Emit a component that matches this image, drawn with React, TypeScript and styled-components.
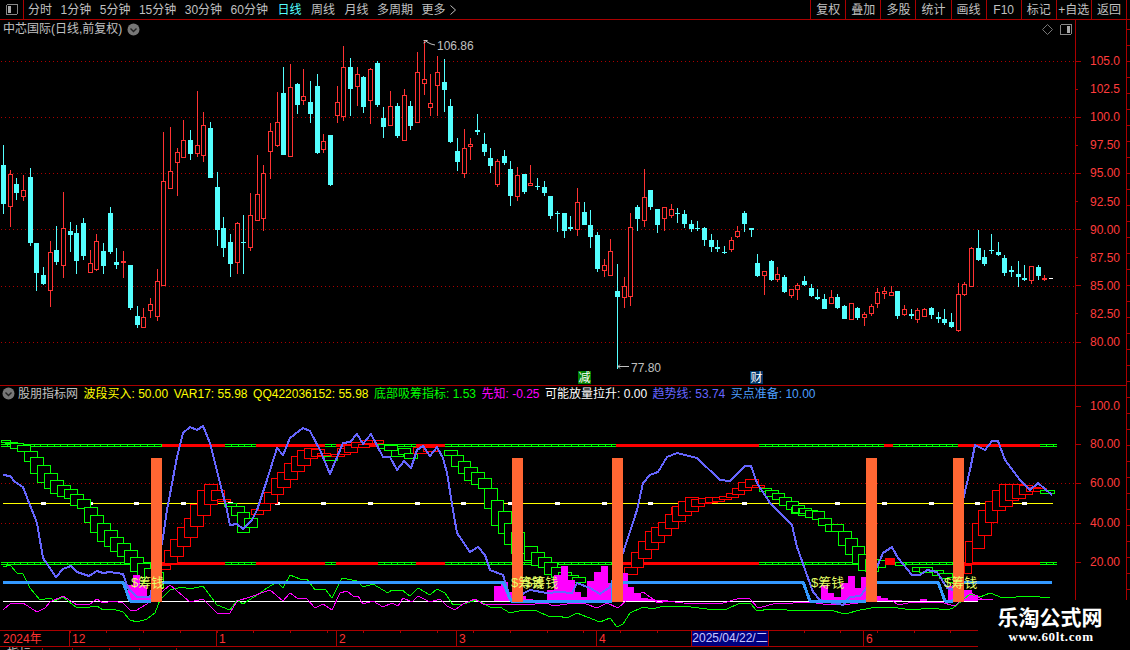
import React from "react";
import styled, { createGlobalStyle } from "styled-components";

const LINE_RED = "#aa0000";
const AXIS_RED = "#ff3c3c";
const CYAN = "#54ffff";
const UP_RED = "#ff3232";
const GREEN = "#00ff00";
const PURE_RED = "#ff0000";
const MAGENTA = "#ff00ff";
const TREND = "#6666ff";
const SKY = "#3399ff";
const ORANGE = "#ff6633";
const FONT = `"Liberation Sans", "Noto Sans CJK SC", sans-serif`;

const GlobalStyle = createGlobalStyle`
  html, body {
    margin: 0;
    padding: 0;
    background: #000;
  }
`;

const Page = styled.div`
  position: relative;
  width: 1130px;
  height: 650px;
  display: flex;
  flex-direction: column;
  overflow: hidden;
  background: #000;
  color: #c0c0c0;
  font: 12px/14px ${FONT};
`;

const Toolbar = styled.header`
  flex: 0 0 20px;
  box-sizing: border-box;
  display: flex;
  align-items: center;
  border-bottom: 1px solid ${LINE_RED};
`;

const ToggleCell = styled.div`
  width: 24px;
  height: 19px;
  box-sizing: border-box;
  display: flex;
  align-items: center;
  justify-content: center;
  border-right: 1px solid ${LINE_RED};
  margin-right: 4px;
`;

const Tabs = styled.nav`
  flex: 1;
  display: flex;
  align-items: center;
  gap: 8.5px;
`;

const Tab = styled.span<{ $active?: boolean; $wide?: boolean }>`
  color: ${(p) => (p.$active ? CYAN : "#c0c0c0")};
  margin-left: ${(p) => (p.$wide ? "1px" : "0")};
  display: flex;
  align-items: center;
  gap: 3px;
`;

const Actions = styled.div`
  display: flex;
  height: 19px;
  margin-right: 3px;
  border-right: 1px solid ${LINE_RED};
`;

const Action = styled.span`
  width: 35.1px;
  box-sizing: border-box;
  display: flex;
  align-items: center;
  justify-content: center;
  white-space: nowrap;
  border-left: 1px solid ${LINE_RED};
`;

const Workspace = styled.main`
  flex: 0 0 627px;
  display: flex;
`;

const Charts = styled.div`
  width: 1075px;
  display: flex;
  flex-direction: column;
`;

const PricePane = styled.section`
  height: 365px;
  display: flex;
  flex-direction: column;
`;

const PaneTitle = styled.div`
  height: 18px;
  display: flex;
  align-items: center;
  padding: 0 3px;
  gap: 5px;
`;

const PaneTools = styled.div`
  margin-left: auto;
  display: flex;
  align-items: center;
  gap: 7px;
`;

const IndicatorPane = styled.section`
  border-top: 1px solid ${LINE_RED};
  display: flex;
  flex-direction: column;
`;

const Legend = styled.div`
  height: 15px;
  display: flex;
  align-items: center;
  padding-left: 2px;
  gap: 5.5px;
  white-space: nowrap;
`;

const LegendItem = styled.span<{ $color: string }>`
  color: ${(p) => p.$color};
`;

const LegendName = styled.span`
  margin-left: -2.5px;
`;

const ChartSvg = styled.svg`
  display: block;
  font-family: ${FONT};
  font-size: 12px;
`;

const Scale = styled.aside`
  width: 52px;
  box-sizing: border-box;
  display: flex;
  flex-direction: column;
  border-left: 1px solid ${LINE_RED};
  border-right: 1px solid ${LINE_RED};
`;

const ScaleSection = styled.div<{ $height: number; $divided?: boolean }>`
  position: relative;
  height: ${(p) => p.$height}px;
  border-top: ${(p) => (p.$divided ? `1px solid ${LINE_RED}` : "none")};
`;

const ScaleRow = styled.div`
  position: absolute;
  left: 0;
  height: 14px;
  display: flex;
  align-items: center;
  color: ${AXIS_RED};
`;

const ScaleTick = styled.i<{ $major?: boolean }>`
  width: ${(p) => (p.$major ? 5 : 2)}px;
  margin-right: ${(p) => (p.$major ? 9 : 12)}px;
  height: 1px;
  background: ${LINE_RED};
`;

const Rail = styled.div`
  width: 3px;
  background-image: repeating-linear-gradient(
    to bottom,
    ${LINE_RED} 0 1px,
    transparent 1px 16px
  );
  background-size: 3px 100%;
  margin-top: 9px;
`;

const DateAxis = styled.div`
  position: relative;
  height: 17px;
  box-sizing: border-box;
  border-top: 1px solid ${LINE_RED};
  border-bottom: 1px solid ${LINE_RED};
  color: ${UP_RED};
  background-image: repeating-linear-gradient(
    to right,
    ${LINE_RED} 0 1px,
    transparent 1px 36.7px
  );
  background-size: 100% 2px;
  background-repeat: no-repeat;
  background-position: 33px 0;
`;

const DateStart = styled.span`
  position: absolute;
  left: 3px;
  top: 1px;
`;

const MonthMark = styled.span`
  position: absolute;
  top: 0;
  bottom: 0;
  border-left: 1px solid ${LINE_RED};
  padding-left: 2px;
  line-height: 16px;
`;

const CursorDate = styled.span`
  position: absolute;
  left: 691px;
  top: 0;
  width: 78px;
  height: 15px;
  box-sizing: border-box;
  background: #000080;
  border-left: 1px solid ${LINE_RED};
  border-right: 1px solid ${LINE_RED};
  color: #c8c8ff;
  line-height: 15px;
  text-align: center;
  white-space: nowrap;
`;

const Footer = styled.footer`
  flex: 1;
  display: flex;
  overflow: hidden;
`;

const FooterTab = styled.span<{ $width: number }>`
  width: ${(p) => p.$width}px;
  box-sizing: border-box;
  padding-left: 7px;
  line-height: 12px;
  margin-top: 1px;
  border-right: 1px solid ${LINE_RED};
  white-space: nowrap;
`;

const Watermark = styled.div`
  position: absolute;
  right: 0;
  bottom: 0;
  width: 152px;
  height: 50px;
  background: #000;
  color: #fff;
  display: flex;
  flex-direction: column;
  align-items: center;
`;

const WatermarkTitle = styled.div`
  margin: 4px 0 0 -8px;
  font: 700 21px/24px "Noto Sans CJK SC", sans-serif;
`;

const WatermarkUrl = styled.div`
  margin: 2px 0 0 -6px;
  font: 700 13px/14px "Liberation Serif", serif;
  letter-spacing: 0.6px;
`;

// candles read off the chart: kind, high, body top, body bottom, low (3x pixels from y0)
type Row = [string, number, number, number, number];
type Candle = { kind: string; hi: number; top: number; bot: number; lo: number };

const seg = (y0: number, rows: Row[]): Candle[] =>
  rows.map(([kind, hi, top, bot, lo]) => ({
    kind,
    hi: Math.round(y0 + hi / 3),
    top: Math.round(y0 + top / 3),
    bot: Math.round(y0 + bot / 3),
    lo: Math.round(y0 + lo / 3),
  }));

const candles: Candle[] = [
  ...seg(130, [
    ["c", 45, 105, 222, 252], ["r", 120, 133, 230, 291], ["c", 144, 162, 189, 210], ["r", 136, 181, 200, 213],
    ["c", 114, 141, 339, 348], ["c", 339, 339, 429, 483], ["c", 411, 435, 462, 465], ["r", 334, 367, 483, 531],
    ["c", 288, 360, 396, 405], ["r", 186, 295, 407, 444], ["c", 276, 303, 315, 366], ["c", 285, 309, 393, 432],
    ["c", 264, 279, 378, 390], ["r", 360, 400, 428, 428], ["r", 312, 334, 419, 423], ["c", 339, 363, 408, 432],
    ["c", 231, 249, 366, 372], ["c", 354, 396, 405, 417], ["r", 363, 393, 396, 444], ["c", 405, 405, 534, 540],
    ["c", 528, 558, 585, 594], ["r", 534, 562, 593, 593], ["r", 504, 523, 542, 564], ["r", 417, 454, 560, 573],
    ["r", 6, 154, 468, 468], ["r", -9, 124, 176, 176], ["r", 54, 67, 98, 198], ["r", -30, 31, 83, 83],
    ["c", 0, 30, 72, 90], ["r", -117, 46, 71, 81], ["r", -54, -14, 77, 96], ["c", -24, -6, 144, 144],
    ["c", 126, 171, 300, 348], ["c", 261, 294, 354, 381], ["c", 312, 336, 402, 441], ["r", 276, 280, 399, 432],
    ["c", 255, 336, 339, 432], ["r", 189, 256, 353, 363], ["r", 75, 193, 272, 272], ["r", 105, 130, 266, 303],
    ["r", -22, 3, 65, 147], ["r", -114, -23, 47, 50], ["c", -189, -111, 75, 75], ["r", -198, -129, 80, 80],
  ]),
  ...seg(40, [
    ["c", 128, 132, 195, 222], ["r", 87, 169, 182, 195], ["c", 123, 186, 222, 249], ["c", 102, 138, 340, 342],
    ["r", 282, 304, 330, 339], ["c", 285, 285, 435, 438], ["r", 138, 187, 227, 249], ["r", 18, 82, 231, 243],
    ["c", 54, 81, 147, 228], ["r", 81, 103, 140, 198], ["c", 108, 111, 201, 219], ["r", 84, 88, 182, 252],
    ["c", 63, 69, 195, 201], ["c", 201, 234, 261, 294], ["r", 153, 199, 257, 257], ["c", 189, 198, 288, 294],
    ["r", 147, 166, 302, 302], ["c", 183, 198, 258, 270], ["r", 36, 97, 248, 248], ["r", 3, 118, 131, 165],
    ["r", 102, 190, 203, 228], ["r", 48, 97, 137, 228], ["c", 57, 126, 150, 216], ["c", 177, 198, 306, 309],
    ["c", 294, 333, 366, 393], ["r", 267, 325, 402, 414], ["r", 294, 313, 322, 360], ["c", 222, 270, 276, 285],
    ["c", 279, 312, 336, 348], ["c", 324, 354, 378, 399], ["r", 357, 364, 435, 441], ["c", 330, 348, 369, 375],
    ["c", 363, 387, 468, 498], ["r", 381, 406, 471, 483], ["c", 402, 402, 456, 462], ["r", 375, 430, 437, 437],
    ["c", 414, 438, 441, 450], ["c", 423, 441, 459, 468], ["c", 468, 468, 528, 537], ["c", 513, 519, 522, 576],
    ["c", 519, 519, 573, 594], ["c", 528, 561, 567, 573], ["r", 444, 487, 570, 588],
  ]),
  ...seg(160, [
    ["c", 126, 156, 195, 195], ["c", 150, 195, 231, 264], ["c", 216, 225, 327, 336], ["r", 297, 316, 332, 351],
    ["r", 237, 274, 347, 347], ["c", 312, 393, 411, 627], ["r", 351, 379, 413, 444], ["r", 159, 202, 410, 438],
    ["c", 135, 141, 177, 213], ["r", 27, 112, 182, 201], ["c", 90, 90, 141, 150], ["c", 147, 147, 195, 219],
    ["r", 141, 142, 176, 213], ["r", 132, 148, 167, 174], ["c", 144, 159, 161, 189], ["c", 150, 162, 192, 204],
    ["c", 180, 192, 207, 216], ["c", 183, 205, 208, 213], ["c", 201, 204, 240, 258], ["c", 222, 240, 261, 276],
    ["c", 240, 261, 267, 276], ["c", 258, 276, 279, 282], ["r", 231, 241, 270, 276], ["r", 198, 214, 232, 234],
    ["c", 153, 159, 192, 216], ["c", 204, 204, 210, 231], ["c", 282, 309, 348, 351], ["r", 334, 334, 347, 405],
    ["c", 300, 303, 360, 363], ["r", 321, 343, 359, 366], ["c", 345, 351, 396, 399], ["r", 388, 388, 407, 414],
    ["r", 369, 376, 389, 420], ["c", 348, 363, 375, 378],
  ]),
  ...seg(210, [
    ["c", 222, 234, 258, 261], ["c", 237, 261, 267, 270], ["c", 252, 267, 297, 297], ["r", 240, 262, 281, 281],
    ["c", 252, 261, 294, 297], ["c", 285, 288, 327, 327], ["r", 280, 280, 329, 329], ["c", 291, 294, 324, 330],
    ["r", 306, 313, 323, 348], ["r", 283, 289, 311, 318], ["r", 234, 247, 281, 294], ["r", 231, 244, 251, 267],
    ["r", 228, 247, 257, 257], ["c", 243, 243, 318, 327], ["r", 285, 298, 315, 318], ["c", 297, 312, 318, 327],
    ["r", 294, 301, 329, 339], ["r", 294, 298, 320, 320], ["c", 291, 294, 315, 327], ["c", 306, 321, 327, 339],
    ["c", 297, 327, 339, 345], ["c", 309, 336, 351, 354], ["r", 219, 252, 362, 366], ["r", 216, 223, 255, 258],
    ["r", 111, 115, 231, 231], ["c", 60, 114, 150, 153], ["c", 120, 141, 162, 168], ["c", 72, 120, 123, 132],
    ["c", 96, 126, 135, 138], ["c", 135, 144, 189, 198], ["c", 168, 180, 186, 201], ["c", 153, 192, 201, 231],
    ["c", 165, 204, 210, 213], ["r", 168, 168, 212, 222], ["c", 165, 171, 198, 210],
  ]),
];

const barX = (i: number) => Math.floor(3.5 + 6.675 * i);

function CandleMark({ candle, index }: { candle: Candle; index: number }) {
  const x = barX(index);
  const { kind, hi, top, bot, lo } = candle;
  if (kind === "c") {
    return (
      <g fill={CYAN}>
        <rect x={x} y={hi} width={1} height={Math.max(lo - hi, 1)} />
        <rect x={x - 2} y={top} width={5} height={Math.max(bot - top, 1)} />
      </g>
    );
  }
  return (
    <g>
      <rect x={x} y={hi} width={1} height={Math.max(lo - hi, 1)} fill={UP_RED} />
      <rect x={x - 1.5} y={top + 0.5} width={4} height={Math.max(bot - top - 1, 1)} fill="#000" stroke={UP_RED} />
    </g>
  );
}

function DottedLine({ y }: { y: number }) {
  const dots: number[] = [];
  for (let x = 1; x < 1075; x += 4) dots.push(x);
  return (
    <g fill={LINE_RED}>
      {dots.map((x) => (
        <rect key={x} x={x} y={y} width={1} height={1} />
      ))}
    </g>
  );
}

function PriceChart() {
  const grid = [61, 117, 173, 229, 286, 342];
  return (
    <ChartSvg width={1075} height={347} viewBox="0 38 1075 347" shapeRendering="crispEdges">
      {grid.map((y) => (
        <DottedLine key={y} y={y} />
      ))}
      {candles.map((c, i) => (
        <CandleMark key={i} candle={c} index={i} />
      ))}
      <rect x={1044} y={275} width={1} height={6} fill={UP_RED} />
      <rect x={1042} y={278} width={5} height={2} fill={UP_RED} />
      <rect x={1049} y={278} width={4} height={1} fill="#fff" />
      <g stroke="#c0c0c0" fill="none" shapeRendering="auto">
        <path d="M423.5 40.5h4M423.5 43l4-2M427 42l4 2 4 1" />
        <path d="M618 366.5h11M618 366.5l2-2M618 366.5l2 2" />
      </g>
      <text x={437} y={50} fill="#c0c0c0">106.86</text>
      <text x={631} y={372} fill="#c0c0c0">77.80</text>
      <rect x={578} y={371} width={13} height={13} fill="#008000" />
      <text x={578.5} y={382} fill="#fff">减</text>
      <rect x={750} y={371} width={13} height={13} fill="#003366" />
      <text x={750.5} y={382} fill="#fff">财</text>
    </ChartSvg>
  );
}

type Box = [number, number, number, number];
type Seg = [string, number, number];

const boxes = (x0: number, y0: number, rows: Box[]): Box[] =>
  rows.map(([a, b, c, d]) => [
    Math.round(x0 + a / 3),
    Math.round(y0 + b / 3),
    Math.round(x0 + c / 3),
    Math.round(y0 + d / 3),
  ]);

const greenBoxes: Box[] = [
  ...boxes(0, 425, [
    [3, 45, 30, 50], [14, 50, 50, 55], [30, 55, 68, 68], [52, 60, 90, 77], [72, 77, 110, 107], [91, 97, 128, 143],
    [112, 121, 149, 170], [133, 145, 170, 190], [151, 166, 188, 205], [172, 181, 209, 212], [193, 193, 230, 220],
    [211, 208, 248, 239], [232, 223, 269, 250], [253, 247, 290, 292], [271, 271, 308, 320], [292, 295, 329, 347],
    [313, 316, 350, 363], [331, 337, 368, 378], [352, 355, 389, 393], [373, 376, 410, 415], [391, 397, 428, 439],
    [412, 415, 449, 457], [433, 430, 470, 475], [452, 442, 489, 487],
  ]),
  ...boxes(0, 370, [
    [673, 400, 708, 408], [694, 409, 731, 435], [712, 425, 748, 486], [733, 444, 770, 471],
    [973, 258, 1010, 270], [1133, 223, 1170, 235], [1152, 225, 1190, 240], [1173, 240, 1210, 257],
    [1194, 235, 1230, 252], [1212, 250, 1250, 265],
  ]),
  ...boxes(420, 370, [
    [72, 241, 110, 255], [93, 256, 130, 288], [114, 273, 151, 308], [133, 291, 170, 330], [154, 306, 191, 343],
    [175, 325, 212, 355], [193, 355, 230, 415], [214, 390, 250, 465], [235, 423, 272, 488], [253, 458, 290, 522],
    [1016, 353, 1052, 363], [1036, 360, 1073, 378], [1055, 370, 1092, 388], [1076, 382, 1113, 405],
    [1097, 394, 1134, 418], [1115, 405, 1152, 425], [1136, 415, 1173, 430],
  ]),
  ...boxes(420, 510, [
    [274, 65, 311, 128], [313, 109, 350, 150], [334, 127, 371, 165], [355, 142, 392, 170], [373, 157, 410, 192],
    [394, 172, 431, 200], [415, 185, 452, 205], [436, 196, 473, 212], [457, 202, 494, 217],
  ]),
  ...boxes(780, 510, [
    [34, -10, 70, 10], [55, -5, 90, 14], [76, 0, 112, 20], [97, 3, 132, 27], [115, 25, 152, 45], [134, 43, 172, 62],
    [154, 43, 190, 64], [173, 64, 212, 105], [196, 85, 232, 132], [215, 109, 252, 160], [235, 133, 272, 180],
    [256, 148, 293, 182], [295, 150, 315, 170], [345, 155, 375, 165], [397, 172, 433, 182], [418, 172, 455, 185],
    [455, 180, 490, 195], [478, 190, 515, 205], [500, 200, 535, 215],
  ]),
  [1040, 490, 1054, 493],
];

const redBoxes: Box[] = [
  ...boxes(0, 510, [
    [470, 165, 509, 178], [493, 120, 530, 160], [511, 87, 548, 137], [532, 52, 569, 109], [553, 24, 590, 81],
  ]),
  ...boxes(0, 370, [
    [571, 402, 608, 469], [592, 361, 629, 435], [613, 343, 650, 402], [634, 361, 671, 390], [652, 388, 689, 392],
    [752, 418, 790, 432], [773, 400, 810, 420], [793, 365, 831, 400], [814, 323, 850, 373], [832, 307, 869, 352],
    [853, 280, 890, 328], [874, 258, 912, 304], [892, 240, 930, 284], [913, 235, 950, 265], [934, 238, 971, 258],
    [952, 250, 989, 256], [994, 252, 1031, 258], [1012, 235, 1050, 252], [1033, 226, 1070, 245],
    [1054, 215, 1090, 232], [1075, 222, 1106, 230], [1087, 210, 1130, 218], [1115, 210, 1150, 218],
    [1240, 230, 1285, 248], [1270, 232, 1310, 242],
  ]),
  ...boxes(420, 370, [
    [754, 412, 792, 430], [775, 398, 812, 420], [796, 390, 833, 410], [814, 386, 851, 407], [835, 384, 872, 400],
    [856, 382, 892, 395], [875, 380, 912, 393], [897, 378, 934, 387], [918, 370, 955, 380], [935, 353, 972, 373],
    [955, 337, 992, 361], [976, 328, 1013, 350], [997, 345, 1033, 350],
  ]),
  ...boxes(420, 510, [
    [613, 172, 650, 192], [634, 127, 670, 172], [655, 94, 692, 145], [676, 64, 713, 118], [694, 52, 731, 97],
    [715, 37, 752, 76], [736, 12, 773, 55], [757, -12, 794, 34], [775, -28, 812, 15], [796, -40, 833, 2],
  ]),
  ...boxes(780, 510, [
    [552, 165, 572, 190], [555, 92, 575, 160], [575, 40, 612, 115], [594, 0, 632, 75], [615, -26, 652, 35],
  ]),
  [992, 490, 1005, 510], [999, 484, 1012, 506], [1005, 484, 1018, 500], [1012, 484, 1025, 498],
  [1019, 485, 1032, 494], [1026, 487, 1040, 491], [1033, 488, 1046, 491],
];

// later boxes cover earlier ones, so everything is painted left to right with a black fill
const stepBoxes = [
  ...greenBoxes.map((b) => ({ b, color: GREEN })),
  ...redBoxes.map((b) => ({ b, color: PURE_RED })),
].sort((p, q) => p.b[0] - q.b[0]);

const bandSegments: Seg[] = [
  ["g", 1, 162], ["r", 162, 225], ["g", 225, 256], ["r", 256, 325], ["g", 325, 336], ["r", 336, 378],
  ["g", 378, 416], ["r", 416, 445], ["g", 445, 616], ["r", 616, 759], ["g", 759, 884], ["r", 884, 893],
  ["g", 893, 958], ["r", 958, 1040], ["g", 1040, 1057],
];

function Band({ y }: { y: number }) {
  return (
    <g>
      {bandSegments.map(([kind, a, b]) => {
        if (kind === "r") {
          return <rect key={a} x={a} y={y} width={b - a} height={3} fill={PURE_RED} />;
        }
        const ticks: number[] = [];
        for (let t = a + 6; t < b; t += 6.675) ticks.push(Math.round(t));
        return (
          <g key={a} fill={GREEN}>
            <rect x={a} y={y} width={b - a} height={1} />
            <rect x={a} y={y + 2} width={b - a} height={1} />
            {ticks.map((t) => (
              <rect key={t} x={t} y={y + 1} width={1} height={1} />
            ))}
          </g>
        );
      })}
    </g>
  );
}

const histogram: Box[] = [
  [128, 585, 133, 601], [133, 575, 140, 601], [140, 585, 147, 601], [147, 596, 151, 601],
  [494, 586, 501, 601], [501, 582, 508, 601], [508, 592, 512, 601], [523, 596, 526, 601], [526, 599, 533, 601],
  [547, 590, 554, 601], [554, 575, 561, 601], [561, 566, 568, 601], [568, 580, 575, 601], [575, 592, 581, 601],
  [581, 597, 587, 601], [587, 581, 594, 601], [594, 572, 601, 601], [601, 566, 608, 601], [608, 583, 612, 601],
  [623, 573, 628, 601], [628, 587, 634, 601], [634, 593, 641, 601], [641, 598, 648, 601], [648, 599, 655, 601],
  [655, 600, 668, 601],
  [821, 585, 828, 601], [828, 593, 834, 601], [834, 597, 841, 601], [841, 583, 848, 601], [848, 576, 855, 601],
  [855, 588, 861, 601], [861, 577, 866, 601], [877, 596, 881, 601], [881, 598, 888, 601], [888, 600, 902, 601],
  [920, 599, 927, 601], [948, 586, 953, 601], [964, 590, 972, 601], [972, 595, 978, 601], [978, 599, 985, 601],
];

const pts = (flat: number[]) => {
  const out: string[] = [];
  for (let i = 0; i < flat.length; i += 2) out.push(`${flat[i]},${flat[i + 1]}`);
  return out.join(" ");
};

const trendLine = pts([
  3, 475, 10, 476, 15, 482, 23, 487, 28, 500, 37, 523, 43, 558, 56, 577, 63, 569, 71, 566, 77, 572, 89, 576, 97, 571,
  103, 573, 110, 572, 123, 574, 128, 588, 137, 597, 150, 597, 163, 538, 167, 510, 177, 457, 183, 433, 190, 427, 197, 430,
  203, 426, 210, 443, 220, 483, 227, 510, 230, 525, 237, 524, 243, 529, 252, 520, 257, 510, 267, 480, 277, 448, 283, 455,
  290, 438, 303, 428, 310, 431, 320, 450, 330, 474, 343, 443, 350, 442, 357, 434, 363, 444, 371, 434, 383, 457, 390, 457,
  397, 470, 404, 461, 411, 468, 417, 450, 423, 446, 430, 456, 437, 447, 443, 458, 447, 473, 453, 510, 457, 533, 470, 552,
  478, 547, 485, 555, 490, 570, 503, 575, 511, 600, 530, 590, 547, 593, 560, 592, 572, 593, 577, 583, 590, 588, 600, 594,
  610, 587, 623, 553, 637, 510, 643, 483, 650, 475, 658, 472, 667, 457, 677, 453, 697, 458, 720, 480, 730, 481, 745, 466,
  751, 466, 757, 483, 770, 503, 780, 513, 792, 525, 797, 547, 813, 592, 820, 600, 843, 605, 850, 597, 860, 596, 865, 590,
  877, 567, 883, 553, 892, 547, 898, 558, 912, 575, 920, 575, 927, 570, 937, 572, 947, 588, 953, 590, 963, 500, 970, 470,
  975, 445, 985, 450, 992, 441, 998, 441, 1005, 460, 1020, 480, 1030, 490, 1038, 483, 1052, 495,
]);

const skyLine = pts([
  3, 582, 123, 582, 130, 601, 151, 601, 162, 582, 503, 582, 511, 601, 575, 601, 612, 601, 612, 582, 803, 582, 810, 601,
  866, 601, 877, 582, 938, 582, 945, 601, 953, 601, 964, 582, 1052, 582,
]);

const greenLine = pts([
  3, 567, 10, 565, 17, 573, 23, 574, 30, 588, 40, 600, 50, 598, 55, 601, 63, 597, 77, 608, 90, 607, 97, 606, 103, 610,
  113, 609, 123, 612, 130, 620, 137, 622, 147, 619, 155, 613, 160, 600, 170, 590, 182, 587, 190, 589, 203, 586, 217, 605,
  230, 610, 237, 600, 243, 604, 257, 595, 267, 588, 277, 582, 283, 588, 290, 575, 300, 579, 307, 579, 315, 590, 325, 589,
  332, 598, 342, 578, 347, 579, 357, 581, 363, 587, 373, 584, 388, 593, 392, 590, 402, 590, 410, 596, 418, 588, 430, 595,
  437, 589, 445, 593, 453, 605, 463, 604, 477, 600, 490, 607, 500, 607, 510, 613, 523, 610, 537, 611, 550, 617, 558, 616,
  567, 618, 577, 613, 587, 617, 600, 622, 610, 618, 617, 627, 623, 624, 630, 613, 643, 607, 653, 609, 663, 606, 683, 606,
  707, 609, 727, 609, 740, 603, 750, 603, 757, 611, 770, 609, 787, 610, 800, 611, 830, 610, 845, 614, 860, 610, 877, 607,
  890, 607, 913, 610, 930, 608, 947, 610, 953, 608, 963, 600, 970, 594, 980, 597, 990, 593, 1003, 598, 1030, 596, 1050, 598,
]);

const magentaLine = pts([
  3, 610, 10, 604, 23, 603, 37, 612, 45, 608, 50, 602, 63, 596, 77, 605, 90, 604, 97, 599, 103, 603, 113, 601, 123, 603,
  130, 610, 137, 610, 150, 602, 170, 585, 190, 602, 203, 599, 217, 613, 230, 613, 237, 601, 250, 597, 270, 590, 283, 601,
  290, 593, 297, 598, 307, 599, 315, 608, 323, 604, 332, 610, 340, 593, 347, 591, 353, 596, 358, 596, 363, 604, 373, 601,
  383, 607, 392, 603, 398, 606, 403, 598, 412, 602, 418, 596, 430, 602, 440, 599, 447, 606, 455, 610, 463, 604, 475, 599,
  483, 604, 500, 604, 523, 605, 547, 603, 553, 606, 567, 604, 583, 603, 597, 608, 607, 603, 618, 608, 627, 600, 643, 592,
  650, 597, 658, 603, 667, 601, 683, 603, 720, 604, 740, 598, 750, 599, 758, 608, 777, 603, 793, 603, 808, 602, 823, 604,
  843, 605, 880, 600, 893, 601, 898, 605, 913, 602, 940, 602, 955, 606, 970, 592, 983, 600, 993, 599,
]);

function IndicatorChart() {
  const squares: number[] = [];
  for (let x = 43; x < 1030; x += 46.72) squares.push(Math.round(x));
  const bars = [151, 512, 612, 866, 953];
  const tags = [131, 511, 525, 811, 944];
  return (
    <ChartSvg width={1075} height={229} viewBox="0 401 1075 229" shapeRendering="crispEdges">
      {[483, 523].map((y) => (
        <DottedLine key={y} y={y} />
      ))}
      <rect x={3} y={503} width={1050} height={1} fill="#ffff00" />
      {squares.map((x) => (
        <rect key={x} x={x - 2} y={502} width={5} height={3} fill="#fff" />
      ))}
      <Band y={444} />
      <Band y={562} />
      {stepBoxes.map(({ b: [a, t, c, d], color }, i) => (
        <rect key={i} x={a + 0.5} y={t + 0.5} width={c - a} height={Math.max(d - t, 1)} fill="#000" stroke={color} />
      ))}
      <rect x={885} y={558} width={10} height={7} fill={PURE_RED} />
      {histogram.map(([a, b, c, d], i) => (
        <rect key={i} x={a} y={b} width={c - a} height={d - b} fill={MAGENTA} />
      ))}
      <rect x={3} y={601} width={975} height={1} fill="#fff" />
      <g fill="none" strokeLinejoin="round">
        <polyline points={greenLine} stroke={GREEN} strokeWidth={1} />
        <polyline points={magentaLine} stroke={MAGENTA} strokeWidth={1} />
        <polyline points={trendLine} stroke={TREND} strokeWidth={2} />
        <polyline points={skyLine} stroke={SKY} strokeWidth={3} />
      </g>
      {bars.map((x) => (
        <rect key={x} x={x} y={458} width={11} height={144} fill={ORANGE} />
      ))}
      {tags.map((x) => (
        <text key={x} x={x} y={587} fill="#e6ff66" fontSize={13}>$筹钱</text>
      ))}
    </ChartSvg>
  );
}

function RoundChevron() {
  return (
    <svg width="13" height="13" viewBox="0 0 13 13">
      <circle cx="6.5" cy="6.5" r="6" fill="#777" />
      <path d="M3.5 5.5l3 3 3-3" fill="none" stroke="#222" strokeWidth="1.4" />
    </svg>
  );
}

function SplitToggle({ side }: { side: "left" | "right" }) {
  return (
    <svg width="12" height="11" viewBox="0 0 12 11" shapeRendering="crispEdges">
      <rect x="0.5" y="0.5" width="11" height="10" rx="1.5" fill="none" stroke="#888" />
      <rect x={side === "left" ? 2 : 7} y="2" width="3" height="7" fill="#aaa" />
    </svg>
  );
}

function Diamond() {
  return (
    <svg width="11" height="11" viewBox="0 0 11 11">
      <path d="M5.5 .5l5 5-5 5-5-5z" fill="none" stroke="#777" />
    </svg>
  );
}

const periodTabs = ["分时", "1分钟", "5分钟", "15分钟", "30分钟", "60分钟"];
const actions = ["复权", "叠加", "多股", "统计", "画线", "F10", "标记", "+自选", "返回"];
const legend = [
  { color: "#ffff00", text: "波段买入: 50.00" },
  { color: "#ffff00", text: "VAR17: 55.98" },
  { color: "#ffff00", text: "QQ422036152: 55.98" },
  { color: "#00ff00", text: "底部吸筹指标: 1.53" },
  { color: "#ff00ff", text: "先知: -0.25" },
  { color: "#ffffff", text: "可能放量拉升: 0.00" },
  { color: "#6666ff", text: "趋势线: 53.74" },
  { color: "#4d9fff", text: "买点准备: 10.00" },
];
const priceScale = ["105.0", "102.5", "100.0", "97.50", "95.00", "92.50", "90.00", "87.50", "85.00", "82.50", "80.00"];
const indicatorScale = [
  { label: "100.0", y: 406 },
  { label: "80.00", y: 444 },
  { label: "60.00", y: 483 },
  { label: "40.00", y: 523 },
  { label: "20.00", y: 562 },
];
const months = [
  { label: "12", x: 69 },
  { label: "1", x: 216 },
  { label: "2", x: 336 },
  { label: "3", x: 456 },
  { label: "4", x: 596 },
  { label: "6", x: 863 },
];
const footerTabs = [
  { text: "指标", width: 43 },
  { text: "", width: 30 },
  { text: "", width: 37 },
  { text: "", width: 30 },
  { text: "", width: 37 },
];

export default function App() {
  return (
    <Page>
      <GlobalStyle />
      <Toolbar>
        <ToggleCell>
          <SplitToggle side="left" />
        </ToggleCell>
        <Tabs>
          {periodTabs.map((t) => (
            <Tab key={t}>{t}</Tab>
          ))}
          <Tab $active $wide>日线</Tab>
          <Tab $wide>周线</Tab>
          <Tab $wide>月线</Tab>
          <Tab>多周期</Tab>
          <Tab>
            更多
            <svg width="8" height="10" viewBox="0 0 8 10">
              <path d="M1.5 .5l5 4.5-5 4.5" fill="none" stroke="#c0c0c0" />
            </svg>
          </Tab>
        </Tabs>
        <Actions>
          {actions.map((a) => (
            <Action key={a}>{a}</Action>
          ))}
        </Actions>
      </Toolbar>
      <Workspace>
        <Charts>
          <PricePane>
            <PaneTitle>
              中芯国际(日线,前复权)
              <RoundChevron />
              <PaneTools>
                <Diamond />
                <SplitToggle side="right" />
              </PaneTools>
            </PaneTitle>
            <PriceChart />
          </PricePane>
          <IndicatorPane>
            <Legend>
              <RoundChevron />
              <LegendName>股朋指标网</LegendName>
              {legend.map((l) => (
                <LegendItem key={l.text} $color={l.color}>{l.text}</LegendItem>
              ))}
            </Legend>
            <IndicatorChart />
          </IndicatorPane>
          <DateAxis>
            <DateStart>2024年</DateStart>
            {months.map((m) => (
              <MonthMark key={m.label} style={{ left: m.x }}>{m.label}</MonthMark>
            ))}
            <CursorDate>2025/04/22/二</CursorDate>
          </DateAxis>
        </Charts>
        <Scale>
          <ScaleSection $height={365}>
            {priceScale.map((label, i) => (
              <ScaleRow key={label} style={{ top: 34 + i * 28.1 }}>
                <ScaleTick $major={i % 2 === 0} />
                {label}
              </ScaleRow>
            ))}
          </ScaleSection>
          <ScaleSection $height={261} $divided>
            {indicatorScale.map((s) => (
              <ScaleRow key={s.label} style={{ top: s.y - 386 - 7 }}>
                <ScaleTick $major />
                {s.label}
              </ScaleRow>
            ))}
          </ScaleSection>
        </Scale>
        <Rail />
      </Workspace>
      <Footer>
        {footerTabs.map((t, i) => (
          <FooterTab key={i} $width={t.width}>{t.text}</FooterTab>
        ))}
      </Footer>
      <Watermark>
        <WatermarkTitle>乐淘公式网</WatermarkTitle>
        <WatermarkUrl>www.60lt.com</WatermarkUrl>
      </Watermark>
    </Page>
  );
}
